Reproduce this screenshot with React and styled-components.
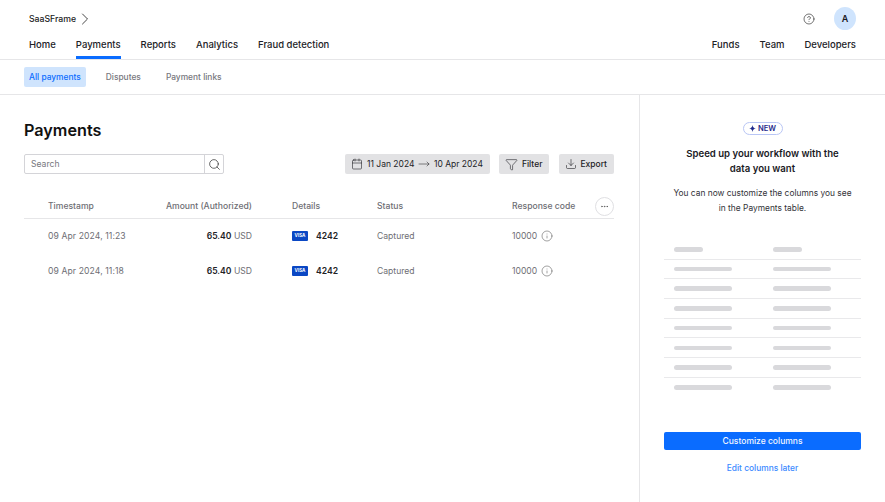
import styled, { createGlobalStyle } from "styled-components";
import {
  Calendar,
  ChevronRight,
  CircleHelp,
  Download,
  Ellipsis,
  Funnel,
  Info,
  MoveRight,
  Search,
} from "lucide-react";

const rows = [
  { time: "09 Apr 2024, 11:23" },
  { time: "09 Apr 2024, 11:18" },
];

const App = () => {
  return (
    <Page>
      <GlobalStyle />
      <Header>
        <TopRow>
          <Brand>
            SaaSFrame
            <ChevronRight size={20} strokeWidth={1} />
          </Brand>
          <TopActions>
            <CircleHelp size={12} strokeWidth={1.25} color="#222" />
            <Avatar>A</Avatar>
          </TopActions>
        </TopRow>
        <NavRow>
          <NavGroup>
            <NavItem>Home</NavItem>
            <NavItem $active>Payments</NavItem>
            <NavItem>Reports</NavItem>
            <NavItem>Analytics</NavItem>
            <NavItem>Fraud detection</NavItem>
          </NavGroup>
          <NavGroup>
            <NavItem>Funds</NavItem>
            <NavItem>Team</NavItem>
            <NavItem>Developers</NavItem>
          </NavGroup>
        </NavRow>
      </Header>
      <SubNav>
        <SubItem $active>All payments</SubItem>
        <SubItem>Disputes</SubItem>
        <SubItem>Payment links</SubItem>
      </SubNav>
      <Main>
        <Content>
          <Title>Payments</Title>
          <Toolbar>
            <SearchBox>
              <SearchText>Search</SearchText>
              <SearchButton>
                <Search size={13} strokeWidth={1.25} color="#222" />
              </SearchButton>
            </SearchBox>
            <Actions>
              <GreyButton $weight={400} $gap={3.75}>
                <Calendar size={12} strokeWidth={1.2} />
                11 Jan 2024
                <MoveRight size={12} strokeWidth={1.1} />
                10 Apr 2024
              </GreyButton>
              <GreyButton>
                <Funnel size={13} strokeWidth={1.1} />
                Filter
              </GreyButton>
              <GreyButton>
                <Download size={12} strokeWidth={1.2} />
                Export
              </GreyButton>
            </Actions>
          </Toolbar>
          <HeadRow>
            <span>Timestamp</span>
            <AmountCell>Amount (Authorized)</AmountCell>
            <DetailsCell>Details</DetailsCell>
            <span>Status</span>
            <span>Response code</span>
            <MoreButton>
              <Ellipsis size={9} strokeWidth={1.5} color="#444" />
            </MoreButton>
          </HeadRow>
          {rows.map((row) => (
            <BodyRow key={row.time}>
              <TimeCell>{row.time}</TimeCell>
              <AmountCell>
                <strong>65.40</strong> USD
              </AmountCell>
              <DetailsCell>
                <VisaBadge>VISA</VisaBadge>
                <strong>4242</strong>
              </DetailsCell>
              <span>Captured</span>
              <CodeCell>
                10000
                <Info size={12} strokeWidth={1.1} color="#555" />
              </CodeCell>
            </BodyRow>
          ))}
        </Content>
        <Side>
          <NewBadge>
            <svg width="7" height="7" viewBox="0 0 10 10">
              <path
                d="M5 0 C5.4 3 7 4.6 10 5 C7 5.4 5.4 7 5 10 C4.6 7 3 5.4 0 5 C3 4.6 4.6 3 5 0Z"
                fill="#1f2a8c"
              />
            </svg>
            NEW
          </NewBadge>
          <SideTitle>Speed up your workflow with the data you want</SideTitle>
          <SideText>
            You can now customize the columns you see in the Payments table.
          </SideText>
          <Skeleton>
            <SkeletonRow>
              <SkeletonBar $short />
              <SkeletonBar $short />
            </SkeletonRow>
            {[0, 1, 2, 3, 4, 5, 6].map((i) => (
              <SkeletonRow key={i}>
                <SkeletonBar />
                <SkeletonBar />
              </SkeletonRow>
            ))}
          </Skeleton>
          <PrimaryButton>Customize columns</PrimaryButton>
          <TextLink>Edit columns later</TextLink>
        </Side>
      </Main>
    </Page>
  );
};

export default App;

const GlobalStyle = createGlobalStyle`
  html, body {
    margin: 0;
    height: 100%;
    overflow: hidden;
    background: #fff;
  }
  body {
    font-family: Inter, "Liberation Sans", sans-serif;
    -webkit-font-smoothing: antialiased;
  }
  * {
    box-sizing: border-box;
  }
`;

const Page = styled.div`
  width: 885px;
  height: 502px;
  display: flex;
  flex-direction: column;
  color: #1a1a1f;
`;

const Header = styled.header`
  height: 60px;
  padding: 7px 29px 0;
  border-bottom: 1px solid #e6e6e8;
  display: flex;
  flex-direction: column;
`;

const TopRow = styled.div`
  height: 23px;
  display: flex;
  justify-content: space-between;
  align-items: center;
`;

const Brand = styled.div`
  display: flex;
  align-items: center;
  font-size: 8.7px;
  font-weight: 500;
  color: #222;

  svg {
    margin-left: -1px;
  }
`;

const TopActions = styled.div`
  display: flex;
  align-items: center;
  gap: 19px;
`;

const Avatar = styled.div`
  width: 22px;
  height: 23px;
  border-radius: 50%;
  background: #cfe4fd;
  display: flex;
  align-items: center;
  justify-content: center;
  font-size: 9px;
  font-weight: 600;
`;

const NavRow = styled.nav`
  flex: 1;
  display: flex;
  justify-content: space-between;
`;

const NavGroup = styled.div`
  display: flex;
  gap: 20px;
`;

const NavItem = styled.div`
  height: 100%;
  padding-top: 8px;
  font-size: 9.5px;
  line-height: 13px;
  font-weight: 500;
  color: #222226;
  border-bottom: 3px solid ${(p) => (p.$active ? "#0a6cff" : "transparent")};
`;

const SubNav = styled.div`
  height: 35px;
  padding: 0 24px;
  border-bottom: 1px solid #e6e6e8;
  display: flex;
  align-items: center;
  gap: 15px;
`;

const SubItem = styled.div`
  height: 20px;
  padding: 0 5px;
  border-radius: 2px;
  display: flex;
  align-items: center;
  font-size: 8.4px;
  font-weight: 500;
  color: ${(p) => (p.$active ? "#0a6cff" : "#77777d")};
  background: ${(p) => (p.$active ? "#cfe4fd" : "transparent")};
`;

const Main = styled.main`
  flex: 1;
  display: flex;
  min-height: 0;
`;

const Content = styled.section`
  width: 640px;
  padding: 25px 25px 0 24px;
  border-right: 1px solid #e6e6e8;
`;

const Title = styled.h1`
  margin: 0;
  font-size: 16.2px;
  line-height: 21px;
  font-weight: 600;
  color: #111;
`;

const Toolbar = styled.div`
  margin-top: 13px;
  display: flex;
  justify-content: space-between;
  align-items: center;
`;

const SearchBox = styled.div`
  width: 200px;
  height: 20px;
  border: 1px solid #d4d4d8;
  border-radius: 2px;
  display: flex;
  align-items: center;
  justify-content: space-between;
`;

const SearchText = styled.span`
  padding-left: 6px;
  font-size: 8.6px;
  color: #77777d;
`;

const SearchButton = styled.div`
  width: 19px;
  height: 100%;
  border-left: 1px solid #d4d4d8;
  display: flex;
  align-items: center;
  justify-content: center;
`;

const Actions = styled.div`
  display: flex;
  align-items: center;
  gap: 9.5px;
`;

const GreyButton = styled.div`
  height: 20px;
  padding: 0 7px 0 6px;
  border-radius: 2px;
  background: #e2e2e4;
  display: flex;
  align-items: center;
  gap: ${(p) => p.$gap || 3.5}px;
  font-size: 8.5px;
  font-weight: ${(p) => p.$weight || 500};
  color: #222226;
  white-space: nowrap;
`;

const tableRow = `
  display: grid;
  grid-template-columns: 112px 92px 125px 135px 83px 19px;
  padding-left: 24px;
  align-items: center;
  font-size: 8.6px;
  color: #6e6e74;
`;

const HeadRow = styled.div`
  ${tableRow}
  margin-top: 22px;
  margin-bottom: -1px;
  height: 23px;
  padding-bottom: 2px;
  border-bottom: 1px solid #e6e6e8;
  font-weight: 500;
`;

const BodyRow = styled.div`
  ${tableRow}
  height: 35px;

  strong {
    font-weight: 600;
    color: #222226;
  }
`;

const TimeCell = styled.span`
  letter-spacing: 0.1px;
`;

const AmountCell = styled.span`
  text-align: right;
  white-space: nowrap;
`;

const DetailsCell = styled.span`
  padding-left: 40px;
  display: flex;
  align-items: center;
  gap: 8px;
`;

const CodeCell = styled.span`
  display: flex;
  align-items: center;
  gap: 4px;
`;

const VisaBadge = styled.span`
  width: 16px;
  height: 10px;
  border-radius: 1px;
  background: #0a47c4;
  color: #fff;
  font-size: 4.5px;
  font-weight: 700;
  display: flex;
  align-items: center;
  justify-content: center;
`;

const MoreButton = styled.div`
  width: 19px;
  height: 19px;
  border-radius: 50%;
  border: 1px solid #e0e0e3;
  background: #fff;
  display: flex;
  align-items: center;
  justify-content: center;
`;

const Side = styled.aside`
  flex: 1;
  padding: 27px 24px 0;
  display: flex;
  flex-direction: column;
  align-items: center;
`;

const NewBadge = styled.div`
  width: 40px;
  height: 13px;
  border: 1px solid #b9c6f5;
  border-radius: 7px;
  display: flex;
  align-items: center;
  justify-content: center;
  gap: 2px;
  font-size: 7.6px;
  font-weight: 600;
  color: #1f2a8c;
`;

const SideTitle = styled.h2`
  margin: 11px 0 0;
  width: 170px;
  text-align: center;
  font-size: 9.6px;
  line-height: 15px;
  font-weight: 600;
  color: #1a1a1f;
`;

const SideText = styled.p`
  margin: 10px 0 0;
  width: 182px;
  text-align: center;
  font-size: 8.4px;
  line-height: 15px;
  color: #333338;
`;

const Skeleton = styled.div`
  width: 100%;
  margin-top: 24px;
`;

const SkeletonRow = styled.div`
  height: 19.7px;
  padding-left: 10px;
  display: grid;
  grid-template-columns: 99px 1fr;
  align-items: center;
  border-bottom: 1px solid #e9e9eb;

  &:last-child {
    border-bottom: none;
  }
`;

const SkeletonBar = styled.div`
  width: ${(p) => (p.$short ? 29 : 58)}px;
  height: 4.5px;
  border-radius: 3px;
  background: #d9d9dc;
`;

const PrimaryButton = styled.div`
  width: 100%;
  height: 18.5px;
  margin-top: 34px;
  border-radius: 2px;
  background: #0a6cff;
  color: #f2f7ff;
  display: flex;
  align-items: center;
  justify-content: center;
  font-size: 8.5px;
  font-weight: 500;
`;

const TextLink = styled.div`
  margin-top: 12.5px;
  font-size: 8.4px;
  font-weight: 500;
  color: #3b8aff;
`;
